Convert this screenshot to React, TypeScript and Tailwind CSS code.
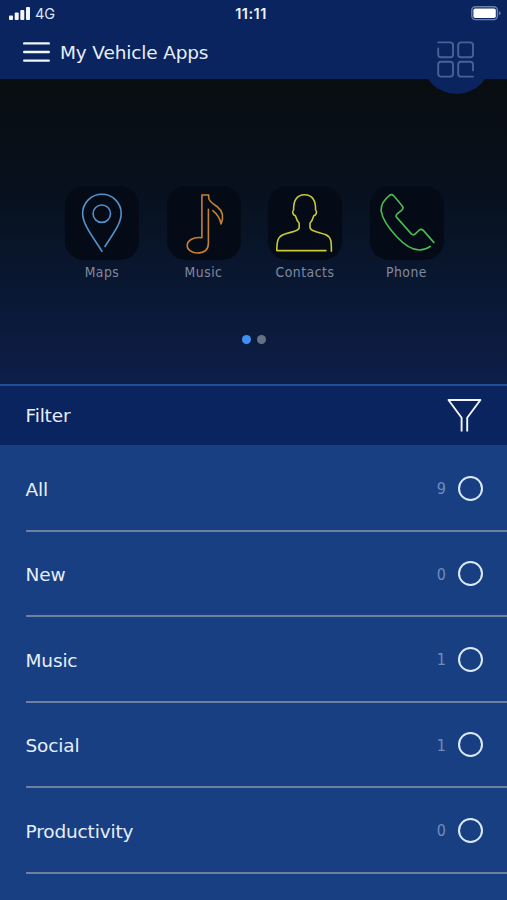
import React, { FunctionComponent, ReactNode } from "react";

interface VehicleApp {
  title: string;
  color: string;
  icon: ReactNode;
}

interface FilterOption {
  title: string;
  count: number;
}

const apps: VehicleApp[] = [
  {
    title: "Maps",
    color: "text-[#5592cc]",
    icon: (
      <>
        <circle cx="36.8" cy="27.7" r="8.7" />
        <path d="M40 60.5C46 50.5 56.2 38.5 56.2 27.5A19.3 19.3 0 0 0 17.6 27.5C17.6 38.5 29 52.5 37 65.2" />
      </>
    ),
  },
  {
    title: "Music",
    color: "text-[#c4812f]",
    icon: (
      <path d="M45.8 24.7C50 28 53 32 54.1 38C57.3 30 55.1 24.5 50 20.5C45 17 42.1 15.5 41.7 12V9H34.9V51.8C26.5 50.5 20.2 54.5 20.2 59.5C20.2 64 25 67 30.5 67C37.5 67 41.4 63.5 41.4 57V23.3" />
    ),
  },
  {
    title: "Contacts",
    color: "text-[#c9c837]",
    icon: (
      <path d="M58 64.6H8.8C9 57 9 51.2 15 48.7C21 46.2 31.2 45.5 31.2 41.5V37.2C29 35 28.2 32.5 27.4 29.8C25.4 29.2 23.4 25.8 25.6 24C25.4 15 28.5 8.8 36.6 8.8S47.8 15 47.6 24C49.8 25.8 47.8 29.2 45.8 29.8C45 32.5 44.2 35 42 37.2V41.5C42 45.5 52 46.2 58 48.7C63.6 51.2 63.4 57 63.4 65.2" />
    ),
  },
  {
    title: "Phone",
    color: "text-[#4abd51]",
    icon: (
      <path d="M63.8 56.4L53.5 44.6Q51.5 42.6 49.3 44L45.3 47.8Q43.1 49.8 41.1 47.6L26.7 31.4Q25.3 29.8 26.9 28.2L32.1 23.8Q33.9 22 32.3 20L23.5 9.6Q21.5 7.6 19.3 9.6C12.5 15 10.5 20 11.3 25.7C12.7 34 18.5 42 26.5 50.5C36.5 61.5 48.5 68.5 60.3 60.4" />
    ),
  },
];

const filters: FilterOption[] = [
  { title: "All", count: 9 },
  { title: "New", count: 0 },
  { title: "Music", count: 1 },
  { title: "Social", count: 1 },
  { title: "Productivity", count: 0 },
];

const StatusBar: FunctionComponent = () => {
  return (
    <div className="grid grid-cols-3 items-center h-[27px] pl-[9px] pr-[14px] font-['Inter',sans-serif] text-[#dce6f8]">
      <div className="flex items-center gap-[5px]">
        <svg width="21" height="14" fill="#f3f6fc">
          <rect x="0" y="8.5" width="4" height="4.6" rx="1" />
          <rect x="5.7" y="5.5" width="4" height="7.6" rx="1" />
          <rect x="11.3" y="3" width="4" height="10.1" rx="1" />
          <rect x="17" y="0" width="4" height="13.1" rx="1" />
        </svg>
        <span className="pt-px text-[14.5px] leading-none">4G</span>
      </div>
      <span className="pt-[2px] text-center text-[14.5px] leading-none font-semibold tracking-[0.5px] text-[#eef3fc]">
        11:11
      </span>
      <svg width="30" height="15" className="justify-self-end -mr-[8px]">
        <rect x="0.8" y="0.8" width="25.6" height="12.8" rx="3.5" fill="none" stroke="#6b80ab" strokeWidth="1.4" />
        <rect x="2.4" y="2.4" width="22.4" height="9.6" rx="1.8" fill="white" />
        <path d="M28 5L30 7.2L28 9.4Z" fill="#6b80ab" />
      </svg>
    </div>
  );
};

const Header: FunctionComponent = () => {
  return (
    <header className="relative h-[79px] bg-[#0a245f]">
      <div className="absolute left-[421.5px] top-[25px] size-[69px] rounded-full bg-[#0a245f]" />
      <div className="relative">
        <StatusBar />
        <div className="flex items-center h-[50px] pl-[23px]">
          <svg width="27" height="22" stroke="#f1f5fc" strokeWidth="2.4" strokeLinecap="round">
            <path d="M1.2 2.4H25.8M1.2 11H25.8M1.2 19.6H25.8" />
          </svg>
          <h1 className="ml-[10px] pt-[2px] text-[18.5px] leading-none tracking-[-0.15px] text-[#e6eefb]">
            My Vehicle Apps
          </h1>
        </div>
        <svg
          width="38"
          height="38"
          className="absolute left-[437px] top-[41px]"
          fill="none"
          stroke="#476396"
          strokeWidth="1.9"
          strokeLinecap="round"
        >
          <path d="M1.2 1.4H13.2Q16 1.4 16 4.2V13.4Q16 16.2 13.2 16.2H4Q1.2 16.2 1.2 13.4V7.5" />
          <rect x="21.2" y="1.4" width="14.8" height="14.8" rx="2.8" />
          <rect x="1.2" y="20.8" width="14.8" height="14.8" rx="2.8" />
          <path d="M36 35.6H24Q21.2 35.6 21.2 32.8V23.6Q21.2 20.8 24 20.8H33.2Q36 20.8 36 23.6V29.4" />
        </svg>
      </div>
    </header>
  );
};

const AppTile: FunctionComponent<VehicleApp> = ({ title, color, icon }) => {
  return (
    <div className="flex flex-col items-center w-[74px]">
      <div className={`size-[74px] rounded-[19px] bg-[#040b16] ${color}`}>
        <svg
          width="74"
          height="74"
          fill="none"
          stroke="currentColor"
          strokeWidth="1.6"
          strokeLinecap="round"
          strokeLinejoin="round"
        >
          {icon}
        </svg>
      </div>
      <span className="mt-[5px] text-[13.8px] leading-[15px] [font-stretch:condensed] tracking-[0.5px] text-[#8089a0]">
        {title}
      </span>
    </div>
  );
};

const FilterRow: FunctionComponent<FilterOption> = ({ title, count }) => {
  return (
    <li className="flex items-center h-[85.5px] ml-[25.5px] pt-px pr-6 border-b-2 border-[#6c809f]">
      <span className="flex-1 pt-[3px] text-[18.5px] leading-none tracking-[-0.15px] text-[#e6eefb]">
        {title}
      </span>
      <span className="mr-[12px] pt-[2px] text-[16px] leading-none [font-stretch:condensed] text-[#6f8dbb]">
        {count}
      </span>
      <span className="size-[25px] rounded-full border-2 border-[#dce9fa]" />
    </li>
  );
};

export default function App() {
  return (
    <div className="flex flex-col w-[507px] h-[900px] overflow-hidden bg-[#193f83] font-['DejaVu_Sans',sans-serif]">
      <Header />
      <section className="flex flex-col items-center h-[305px] pt-[107px] bg-linear-to-b from-[#090d11] via-[#07111f] via-40% to-[#0d1e49]">
        <div className="flex gap-[27.5px] pl-[1.5px]">
          {apps.map((app) => (
            <AppTile {...app} key={app.title} />
          ))}
        </div>
        <div className="flex gap-[6px] mt-[55px]">
          <span className="size-[9px] rounded-full bg-[#4090f4]" />
          <span className="size-[9px] rounded-full bg-[#667183]" />
        </div>
      </section>
      <div className="flex shrink-0 items-center justify-between h-[61px] pl-[25.5px] pr-[25px] border-t-2 border-[#205099] bg-[#0a245f]">
        <h2 className="pt-px text-[18.5px] leading-none tracking-[-0.15px] text-[#e6eefb]">Filter</h2>
        <svg width="35" height="34" fill="none" stroke="#f1f5fc" strokeWidth="1.9" strokeLinejoin="round">
          <path d="M14.6 32.4V18.8L1.5 1H33.4L20.2 18.8V32.4" />
        </svg>
      </div>
      <ul className="pt-px">
        {filters.map((filter) => (
          <FilterRow {...filter} key={filter.title} />
        ))}
      </ul>
    </div>
  );
}
